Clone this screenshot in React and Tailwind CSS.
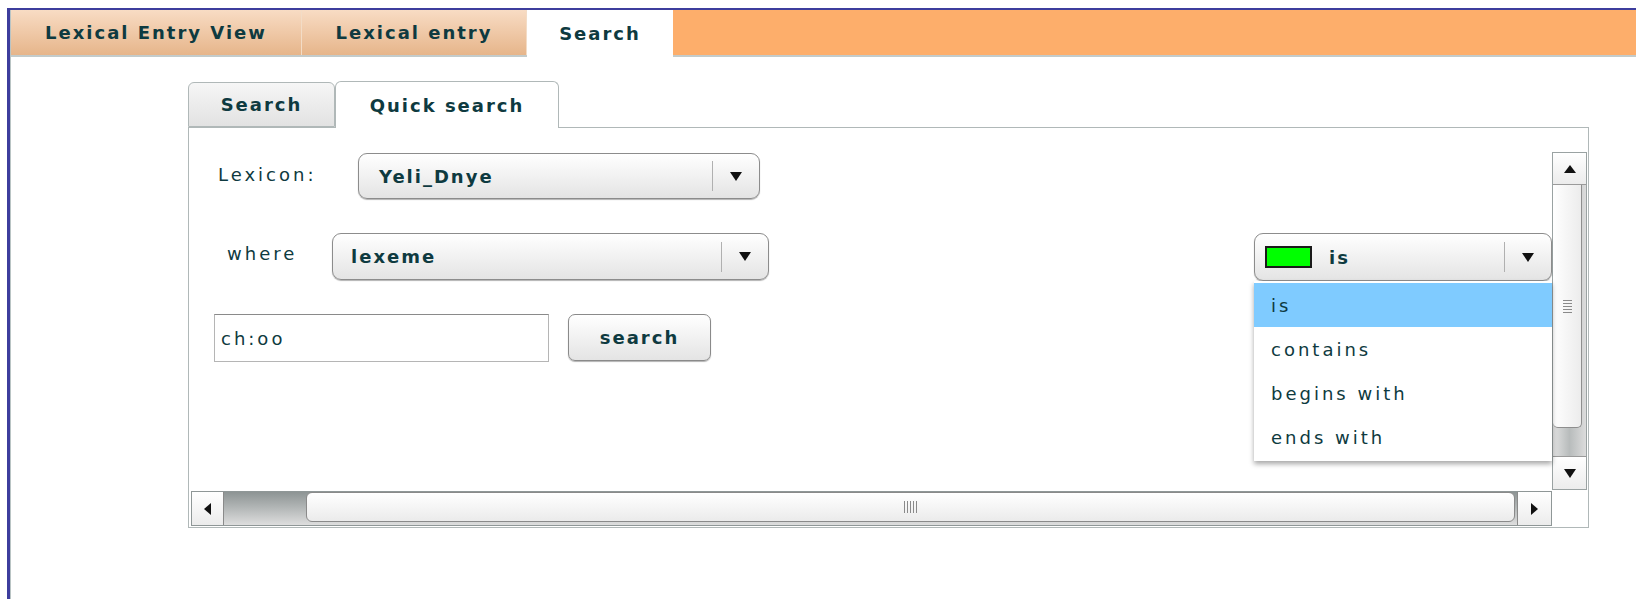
import React from 'react';

const font = { fontFamily: '"DejaVu Sans", Verdana, sans-serif' };

const DownArrow = () => (
  <svg width="12" height="9" viewBox="0 0 12 9">
    <polygon points="0,0 12,0 6,9" fill="#111" />
  </svg>
);

const UpArrow = () => (
  <svg width="12" height="8" viewBox="0 0 12 8">
    <polygon points="0,8 12,8 6,0" fill="#111" />
  </svg>
);

const LeftArrow = () => (
  <svg width="7" height="12" viewBox="0 0 7 12">
    <polygon points="7,0 7,12 0,6" fill="#111" />
  </svg>
);

const RightArrow = () => (
  <svg width="7" height="12" viewBox="0 0 7 12">
    <polygon points="0,0 0,12 7,6" fill="#111" />
  </svg>
);

// combo box with a divider and a dropdown arrow on the right
const Combo = ({ className, children }) => (
  <div
    className={`flex items-center rounded-[9px] border border-[#8c8c8c] bg-linear-to-b from-white to-[#e4e4e4] shadow-[0_1px_1px_rgba(0,0,0,0.3)] ${className}`}
  >
    <div className="flex flex-1 items-center">{children}</div>
    <div className="h-[30px] w-px bg-[#b0b0b0]" />
    <div className="flex w-[46px] justify-center">
      <DownArrow />
    </div>
  </div>
);

const TopTab = ({ label, active, width }) => (
  <div
    className={
      active
        ? `relative z-10 -mb-[2px] flex h-[47px] items-center justify-center bg-white ${width}`
        : `flex h-[45px] items-center justify-center border-r border-[#f3dcc6] bg-linear-to-b from-[#f8dcc4] to-[#e6b58a] ${width}`
    }
  >
    <span className="text-[18px] font-bold tracking-[2px] text-[#0e3a40]">{label}</span>
  </div>
);

const VScrollbar = () => (
  <div className="flex h-[338px] w-[35px] flex-col border border-[#9aa2a2] bg-linear-to-r from-[#e2e2e2] via-[#b8bcbc] to-[#dcdcdc]">
    <div className="flex h-[32px] items-center justify-center border-b border-[#9a9a9a] bg-linear-to-b from-white to-[#ececec]">
      <UpArrow />
    </div>
    <div className="flex h-[243px] items-center justify-center rounded-b-[5px] border-r border-b border-[#8e8e8e] bg-linear-to-r from-white to-[#ececec] mr-[4px]">
      <div className="flex flex-col gap-[2px]">
        <div className="h-px w-[9px] bg-[#8a8a8a]" />
        <div className="h-px w-[9px] bg-[#8a8a8a]" />
        <div className="h-px w-[9px] bg-[#8a8a8a]" />
        <div className="h-px w-[9px] bg-[#8a8a8a]" />
        <div className="h-px w-[9px] bg-[#8a8a8a]" />
      </div>
    </div>
    <div className="flex-1" />
    <div className="flex h-[33px] items-center justify-center border-t border-[#9a9a9a] bg-linear-to-b from-white to-[#ececec]">
      <DownArrow />
    </div>
  </div>
);

const HScrollbar = () => (
  <div className="ml-[2px] flex h-[35px] flex-1 border border-[#8f9797] bg-linear-to-b from-[#8d9494] to-[#dedede]">
    <div className="flex w-[32px] items-center justify-center border-r border-[#8a8a8a] bg-linear-to-b from-white to-[#ececec]">
      <LeftArrow />
    </div>
    <div className="w-[82px]" />
    <div className="flex flex-1 items-center justify-center rounded-[6px] border border-[#8a8a8a] bg-linear-to-b from-white to-[#ebebeb] mb-[3px]">
      <div className="flex gap-[2px]">
        <div className="h-[12px] w-px bg-[#8a8a8a]" />
        <div className="h-[12px] w-px bg-[#8a8a8a]" />
        <div className="h-[12px] w-px bg-[#8a8a8a]" />
        <div className="h-[12px] w-px bg-[#8a8a8a]" />
        <div className="h-[12px] w-px bg-[#8a8a8a]" />
      </div>
    </div>
    <div className="w-[2px]" />
    <div className="flex w-[34px] items-center justify-center border-l border-[#8a8a8a] bg-linear-to-b from-white to-[#ececec]">
      <RightArrow />
    </div>
  </div>
);

const matchOptions = ['is', 'contains', 'begins with', 'ends with'];

export default function App() {
  return (
    <div className="h-[599px] w-[1636px] overflow-hidden bg-white text-[#0e3a40]" style={font}>
      <div className="ml-[7px] mt-[8px] h-[591px] border-l-[3px] border-t-[2px] border-[#3d3d9d]">
        <div className="h-full border-l border-[#b9c4c4]">
          {/* main tab bar */}
          <div className="flex h-[47px] border-b-2 border-[#c3cbcb] bg-[#fdae6b]">
            <TopTab label="Lexical Entry View" width="w-[291px]" />
            <TopTab label="Lexical entry" width="w-[225px]" />
            <TopTab label="Search" width="w-[146px]" active />
          </div>

          <div className="pl-[177px] pt-[23px]">
            {/* inner tabs */}
            <div className="flex h-[47px] items-end">
              <div className="flex h-[45px] w-[147px] items-center justify-center rounded-t-[6px] border border-[#b0b8b8] bg-linear-to-b from-[#f6f6f6] to-[#e2e2e2]">
                <span className="text-[18px] font-bold tracking-[2px]">Search</span>
              </div>
              <div className="relative z-10 -mb-px flex h-[47px] w-[224px] items-center justify-center rounded-t-[6px] border border-b-0 border-[#b0b8b8] bg-white">
                <span className="text-[18px] font-bold tracking-[2px]">Quick search</span>
              </div>
            </div>

            {/* tab content */}
            <div className="flex h-[401px] w-[1401px] flex-col border border-[#b0b8b8]">
              <div className="flex flex-1">
                <div className="flex flex-1 flex-col pt-[25px]">
                  <div className="flex items-start pl-[29px]">
                    <span className="mt-[8px] w-[140px] text-[18px] tracking-[3px]">Lexicon:</span>
                    <Combo className="h-[46px] w-[402px]">
                      <span className="pl-[20px] text-[18px] font-bold tracking-[2px]">Yeli_Dnye</span>
                    </Combo>
                  </div>

                  <div className="mt-[34px] flex items-start pl-[38px]">
                    <span className="mt-[7px] w-[105px] text-[18px] tracking-[3px]">where</span>
                    <Combo className="h-[47px] w-[437px]">
                      <span className="pl-[18px] text-[18px] font-bold tracking-[2px]">lexeme</span>
                    </Combo>
                    <div className="relative ml-auto">
                      <Combo className="h-[48px] w-[298px]">
                        <div className="ml-[10px] h-[22px] w-[47px] border-2 border-[#1a1a1a] bg-[#00ff00]" />
                        <span className="pl-[17px] text-[18px] font-bold tracking-[2px]">is</span>
                      </Combo>
                      <div className="absolute left-0 top-full z-20 w-full bg-white pt-[2px] pb-[2px] shadow-[0_3px_5px_rgba(0,0,0,0.35)]">
                        {matchOptions.map((opt, i) => (
                          <div
                            key={opt}
                            className={`flex h-[44px] items-center pl-[17px] text-[18px] tracking-[3px] ${i === 0 ? 'bg-[#7fcbff]' : ''}`}
                          >
                            {opt}
                          </div>
                        ))}
                      </div>
                    </div>
                  </div>

                  <div className="mt-[33px] flex items-start pl-[25px]">
                    <div className="flex h-[48px] w-[335px] items-center border border-[#b5b5b5] border-t-[#8a8a8a] pl-[6px] text-[18px] tracking-[3px]">
                      ch:oo
                    </div>
                    <button className="ml-[19px] h-[47px] w-[143px] rounded-[7px] border border-[#8a8a8a] bg-linear-to-b from-white to-[#e4e4e4] text-[18px] font-bold tracking-[2px] text-[#0e3a40] shadow-[0_1px_1px_rgba(0,0,0,0.3)]">
                      search
                    </button>
                  </div>
                </div>

                <div className="w-[36px] pt-[24px]">
                  <VScrollbar />
                </div>
              </div>

              <div className="flex h-[36px]">
                <HScrollbar />
                <div className="w-[36px]" />
              </div>
            </div>
          </div>
        </div>
      </div>
    </div>
  );
}
